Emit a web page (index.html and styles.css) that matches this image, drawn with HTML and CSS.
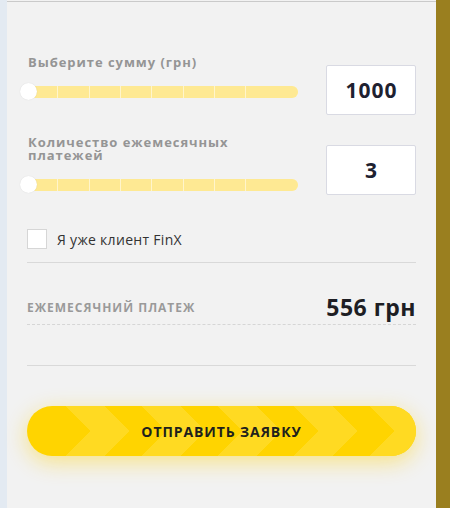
FILE: index.html
```html
<!DOCTYPE html>
<html lang="ru">
<head>
  <meta charset="UTF-8">
  <meta name="viewport" content="width=device-width, initial-scale=1">
  <title>Кредитный калькулятор</title>
  <link rel="stylesheet" href="styles.css">
</head>
<body>

  <div class="side-left"></div>

  <div class="panel">

    <div class="field">
      <div class="field-main">
        <div class="field-label">Выберите сумму (грн)</div>
        <div class="slider">
          <div class="track">
            <span></span><span></span><span></span><span></span>
            <span></span><span></span><span></span><span></span>
          </div>
          <div class="knob"></div>
        </div>
      </div>
      <div class="field-value">1000</div>
    </div>

    <div class="field">
      <div class="field-main">
        <div class="field-label">Количество ежемесячных платежей</div>
        <div class="slider">
          <div class="track">
            <span></span><span></span><span></span><span></span>
            <span></span><span></span><span></span><span></span>
          </div>
          <div class="knob"></div>
        </div>
      </div>
      <div class="field-value">3</div>
    </div>

    <label class="client">
      <span class="checkbox"></span>
      <span>Я уже клиент FinX</span>
    </label>

    <div class="total">
      <span class="total-label">Ежемесячний платеж</span>
      <span class="total-value">556 грн</span>
    </div>

    <div class="spacer"></div>

    <button class="submit-btn"><span>Отправить заявку</span></button>

  </div>

  <div class="side-right"></div>

</body>
</html>
```

FILE: styles.css
```css
body {
  margin: 0;
  display: flex;
  min-height: 100vh;
  background-color: #f2f2f2;
  font-family: 'Open Sans', sans-serif;
}

.side-left {
  width: 7px;
  background-color: #e3eaf2;
}

.side-right {
  width: 14px;
  background-color: #9a7f1f;
}

.panel {
  flex: 1;
  margin-top: 1px;
  border-top: 1px solid #cacaca;
  padding: 54px 20px 0;
}

/* sliders + value boxes */

.field {
  display: flex;
  align-items: flex-start;
  gap: 28px;
}

.field + .field {
  margin-top: 21px;
}

.field-main {
  flex: 1;
}

.field-label {
  max-width: 245px;
  font-size: 13px;
  line-height: 13px;
  font-weight: 700;
  color: #959595;
  letter-spacing: 0.95px;
  padding-left: 1px;
}

.slider {
  position: relative;
  display: flex;
  align-items: center;
  height: 17px;
  margin-top: 14px;
}

.track {
  flex: 1;
  display: flex;
  gap: 1px;
  height: 12px;
  border-radius: 6px;
  overflow: hidden;
  background-color: #fff5cc;
}

.track span {
  flex: 0 0 30.33px;
  background-color: #fee993;
}

.track span:last-child {
  flex: 1;
}

.knob {
  position: absolute;
  left: -7px;
  top: 0;
  width: 17px;
  height: 17px;
  border-radius: 50%;
  background-color: #fff;
  box-shadow: 0 0 1px rgba(0,0,0,0.15);
}

.field-value {
  width: 87px;
  height: 48px;
  margin-top: 9px;
  display: flex;
  align-items: center;
  justify-content: center;
  padding-left: 1px;
  box-sizing: content-box;
  background-color: #fff;
  border: 1px solid #d9dae3;
  border-radius: 2px;
  font-size: 21px;
  font-weight: 700;
  letter-spacing: 1px;
  color: #1e2130;
}

/* checkbox */

.client {
  display: flex;
  align-items: center;
  gap: 10px;
  margin-top: 34px;
  padding-bottom: 13px;
  border-bottom: 1px solid #d9d9d9;
  font-size: 14px;
  color: #333;
  letter-spacing: 0.3px;
}

.checkbox {
  width: 18px;
  height: 18px;
  background-color: #fff;
  border: 1px solid #d6d6d6;
}

/* monthly payment */

.total {
  display: flex;
  justify-content: space-between;
  align-items: center;
  margin-top: 33px;
  padding-bottom: 6px;
  border-bottom: 1px dashed #d6d6d6;
}

.total-label {
  font-size: 12px;
  font-weight: 700;
  letter-spacing: 1px;
  text-transform: uppercase;
  color: #9a9a9a;
}

.total-value {
  font-size: 23px;
  line-height: 22px;
  font-weight: 700;
  letter-spacing: 0.5px;
  color: #1e1e24;
}

.spacer {
  height: 40px;
  border-bottom: 1px solid #d9d9d9;
}

/* button with chevrons */

.submit-btn {
  position: relative;
  display: block;
  width: 100%;
  height: 50px;
  margin-top: 40px;
  border: none;
  border-radius: 25px;
  overflow: hidden;
  background-color: #ffd400;
  box-shadow: 0 6px 22px rgba(255, 208, 0, 0.45);
  font-family: inherit;
  font-size: 14px;
  font-weight: 700;
  letter-spacing: 0.9px;
  text-transform: uppercase;
  color: #201f1c;
  cursor: pointer;
}

.submit-btn::before,
.submit-btn::after {
  content: "";
  position: absolute;
  left: 26px;
  right: 0;
  height: 25px;
  background-size: 76px 25px;
  background-position: 13px 0;
  background-repeat: repeat-x;
}

.submit-btn::before {
  top: 0;
  background-image: linear-gradient(45deg, transparent 24.75%, #ffda22 24.75%, #ffda22 62.38%, transparent 62.38%);
}

.submit-btn::after {
  bottom: 0;
  background-image: linear-gradient(135deg, transparent 24.75%, #ffda22 24.75%, #ffda22 62.38%, transparent 62.38%);
}

.submit-btn span {
  position: relative;
  z-index: 1;
}
```
